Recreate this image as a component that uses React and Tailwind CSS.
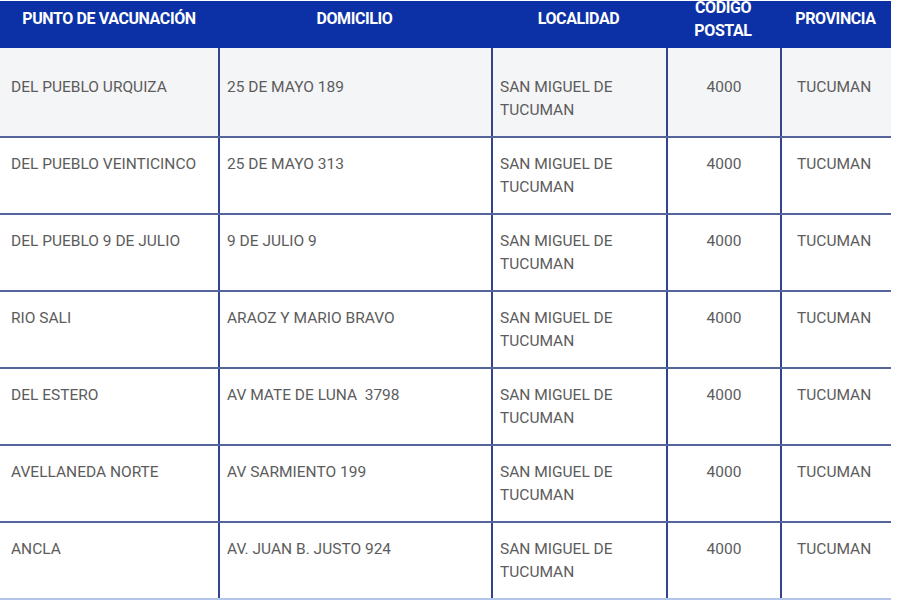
const HEADERS = [
  ["PUNTO DE VACUNACIÓN"],
  ["DOMICILIO"],
  ["LOCALIDAD"],
  ["CODIGO", "POSTAL"],
  ["PROVINCIA"],
];

const ROWS = [
  ["DEL PUEBLO URQUIZA", "25 DE MAYO 189"],
  ["DEL PUEBLO VEINTICINCO", "25 DE MAYO 313"],
  ["DEL PUEBLO 9 DE JULIO", "9 DE JULIO 9"],
  ["RIO SALI", "ARAOZ Y MARIO BRAVO"],
  ["DEL ESTERO", "AV MATE DE LUNA  3798"],
  ["AVELLANEDA NORTE", "AV SARMIENTO 199"],
  ["ANCLA", "AV. JUAN B. JUSTO 924"],
];

const cols = "grid grid-cols-[218px_273px_175px_114px_111px]";

export default function App() {
  return (
    <div className="h-[600px] w-[900px] overflow-hidden bg-white font-['Roboto','Liberation_Sans',sans-serif]">
      <div className="w-[891px] pt-[1px]">
        <div className={`${cols} h-[47px] grid-rows-[47px] overflow-hidden bg-[#0c31a6]`}>
          {HEADERS.map((lines, i) => (
            <div
              key={i}
              className="flex h-[47px] flex-col items-center justify-center pb-[12px] text-center text-[16px] font-bold leading-[23px] tracking-[-0.4px] text-white"
            >
              {lines.map((l) => (
                <span key={l}>{l}</span>
              ))}
            </div>
          ))}
        </div>

        {ROWS.map(([punto, dom], r) => {
          const py = r === 0 ? "pt-[28px] pb-[14px]" : "pt-[15px] pb-[14px]";
          const bottom = r === ROWS.length - 1 ? "border-[#b3c5e9]" : "border-[#55649b]";
          return (
            <div
              key={r}
              className={`${cols} border-b-2 ${bottom} ${r === 0 ? "bg-[#f4f5f7]" : "bg-white"} text-[15.5px] leading-[23px] text-[#5c5c5c]`}
            >
              <div className={`${py} whitespace-pre pl-[11px] pr-2`}>{punto}</div>
              <div className={`${py} whitespace-pre border-l-2 border-[#33438f] px-[7px]`}>{dom}</div>
              <div className={`${py} border-l-2 border-[#33438f] px-[7px]`}>
                SAN MIGUEL DE
                <br />
                TUCUMAN
              </div>
              <div className={`${py} border-l-2 border-[#33438f] text-center`}>4000</div>
              <div className={`${py} border-l-2 border-[#33438f] pl-[15px]`}>TUCUMAN</div>
            </div>
          );
        })}
      </div>
    </div>
  );
}
